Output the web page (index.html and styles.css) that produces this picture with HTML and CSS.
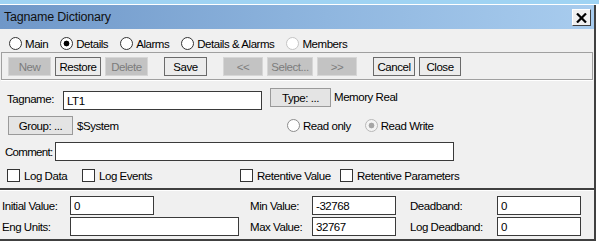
FILE: index.html
```html
<!DOCTYPE html>
<html lang="en">
<head>
    <meta charset="UTF-8">
    <meta name="viewport" content="width=device-width, initial-scale=1.0">
    <title>Tagname Dictionary</title>
    <link rel="stylesheet" href="styles.css">
</head>
<body>
    <div class="sky"></div>
    <div id="window">
        <div class="titlebar">
            <span class="title">Tagname Dictionary</span>
            <button class="close-btn">
                <svg width="11" height="10" viewBox="0 0 11 10"><path d="M1 0.5 L10 9.5 M10 0.5 L1 9.5" stroke="#000" stroke-width="2.2"/></svg>
            </button>
        </div>

        <div id="dialog">
            <div class="tabs">
                <label class="radio"><span class="circle"></span>Main</label>
                <label class="radio"><span class="circle on"></span>Details</label>
                <label class="radio"><span class="circle"></span>Alarms</label>
                <label class="radio"><span class="circle"></span>Details &amp; Alarms</label>
                <label class="radio"><span class="circle off"></span>Members</label>
            </div>

            <div class="toolbar">
                <div class="group">
                    <button class="btn disabled w43">New</button>
                    <button class="btn w46">Restore</button>
                    <button class="btn disabled w43">Delete</button>
                </div>
                <div class="group">
                    <button class="btn w43">Save</button>
                </div>
                <div class="group">
                    <button class="btn disabled w40">&lt;&lt;</button>
                    <button class="btn disabled w46">Select...</button>
                    <button class="btn disabled w40">&gt;&gt;</button>
                </div>
                <div class="group">
                    <button class="btn w42">Cancel</button>
                    <button class="btn w42">Close</button>
                </div>
            </div>

            <div class="row row-tag">
                <span class="lbl-tag">Tagname:</span>
                <input type="text" class="field tag-input" value="LT1">
                <button class="btn type-btn">Type: ...</button>
                <span class="type-value">Memory Real</span>
            </div>

            <div class="row row-group">
                <button class="btn group-btn">Group: ...</button>
                <span class="group-value">$System</span>
                <label class="radio"><span class="circle grey"></span>Read only</label>
                <label class="radio rw"><span class="circle grey-on"></span>Read Write</label>
            </div>

            <div class="row row-comment">
                <span class="lbl-comment">Comment:</span>
                <input type="text" class="field comment-input">
            </div>

            <div class="row row-checks">
                <label class="check c1"><span class="box"></span>Log Data</label>
                <label class="check c2"><span class="box"></span>Log Events</label>
                <label class="check c3"><span class="box"></span>Retentive Value</label>
                <label class="check"><span class="box"></span>Retentive Parameters</label>
            </div>
        </div>

        <div id="values">
            <span class="lbl">Initial Value:</span>
            <div><input type="text" class="field short" value="0"></div>
            <span class="lbl">Min Value:</span>
            <div><input type="text" class="field short" value="-32768"></div>
            <span class="lbl">Deadband:</span>
            <div><input type="text" class="field short" value="0"></div>

            <span class="lbl">Eng Units:</span>
            <div><input type="text" class="field long"></div>
            <span class="lbl">Max Value:</span>
            <div><input type="text" class="field short" value="32767"></div>
            <span class="lbl">Log Deadband:</span>
            <div><input type="text" class="field short" value="0"></div>
        </div>
    </div>
</body>
</html>
```

FILE: styles.css
```css
* {
    box-sizing: border-box;
}

body {
    margin: 0;
    background: #fff;
    font-family: "Liberation Sans", Arial, sans-serif;
    font-size: 11.5px;
    letter-spacing: -0.45px;
    color: #000;
}

.sky {
    height: 4px;
    background: #9fd3f3;
}

#window {
    width: 596px;
    margin-top: 1px;
    background: #f0f0f0;
    border-right: 2px solid #404040;
    border-bottom: 2px solid #404040;
}

/* title bar */
.titlebar {
    display: flex;
    align-items: flex-start;
    height: 24px;
    background: linear-gradient(to right, #6f97c8, #8fb6df 55%, #a8ccee);
}

.title {
    font-size: 12.5px;
    letter-spacing: -0.2px;
    line-height: 24px;
    padding-left: 4px;
    color: #111;
}

.close-btn {
    margin: 4px 3px 0 auto;
    width: 19px;
    height: 17px;
    padding: 0;
    display: flex;
    align-items: center;
    justify-content: center;
    background: #f0f0f0;
    border: 1px solid;
    border-color: #fff #404040 #404040 #fff;
}

/* radios and checks */
.radio, .check {
    display: flex;
    align-items: center;
    height: 13px;
    white-space: nowrap;
}

.circle {
    flex: none;
    width: 13px;
    height: 13px;
    margin-right: 3px;
    border: 1px solid #333;
    border-radius: 50%;
    background: #fff;
}

.circle.on {
    background: radial-gradient(circle, #000 0 2.6px, #fff 3.2px);
}

.circle.off {
    border-color: #c4c4c4;
}

.circle.grey {
    border-color: #8c8c8c;
}

.circle.grey-on {
    border-color: #b8b8b8;
    background: radial-gradient(circle, #a6a6a6 0 2.6px, #f4f4f4 3.2px);
}

.box {
    flex: none;
    width: 13px;
    height: 13px;
    margin-right: 4px;
    border: 1px solid #333;
    background: #fff;
}

.tabs {
    display: flex;
    gap: 12px;
    padding: 8px 0 0 9px;
}

/* toolbar */
.toolbar {
    display: flex;
    gap: 16px;
    width: 592px;
    height: 28px;
    margin: 2px 0 0 1px;
    padding: 4px 0 0 6px;
    border: 1px solid #a0a0a0;
    box-shadow: 0 1px 0 #fff;
}

.group {
    display: flex;
    gap: 4px;
}

.btn {
    height: 19px;
    padding: 0;
    font: inherit;
    letter-spacing: inherit;
    color: #000;
    background: #ececec;
    border: 1px solid #6a6a6a;
}

.btn.disabled {
    color: #7c7c7c;
    background: #c3c3c3;
    border-color: #d6d6d6;
}

.w40 { width: 40px; }
.w42 { width: 42px; }
.w43 { width: 43px; }
.w46 { width: 46px; }

/* fields */
.field {
    height: 19px;
    padding: 0 3px;
    font: inherit;
    letter-spacing: inherit;
    background: #fff;
    border: 1px solid #3a3a3a;
    outline: none;
}

.row {
    display: flex;
    white-space: nowrap;
}

.row-tag {
    align-items: flex-start;
    margin-top: 8px;
    padding-left: 7px;
}

.lbl-tag {
    width: 56px;
    margin-top: 5px;
}

.tag-input {
    width: 199px;
    margin-top: 3px;
}

.type-btn {
    width: 61px;
    margin-left: 8px;
    background: #e4e4e4;
    border-color: #9a9a9a;
}

.type-value {
    margin: 3px 0 0 3px;
}

.row-group {
    align-items: center;
    margin-top: 6px;
    padding-left: 8px;
}

.group-btn {
    width: 65px;
    background: #e4e4e4;
    border-color: #9a9a9a;
}

.group-value {
    width: 210px;
    margin-left: 4px;
}

.rw {
    margin-left: 14px;
}

.row-comment {
    align-items: center;
    margin-top: 7px;
    padding-left: 5px;
}

.lbl-comment {
    width: 50px;
    letter-spacing: -0.7px;
}

.comment-input {
    width: 399px;
}

.row-checks {
    margin-top: 8px;
    padding: 0 0 6px 7px;
}

.c1 { width: 75px; }
.c2 { width: 158px; }
.c3 { width: 100px; }

#dialog {
    border-bottom: 2px solid #404040;
}

/* lower value panel */
#values {
    display: grid;
    grid-template-columns: 68px 180px 62px 98px 87px 83px;
    row-gap: 2px;
    align-items: center;
    padding: 5px 0 3px 2px;
    border-top: 1px solid #fff;
    white-space: nowrap;
}

.short {
    width: 84px;
}

.long {
    width: 169px;
}
```
